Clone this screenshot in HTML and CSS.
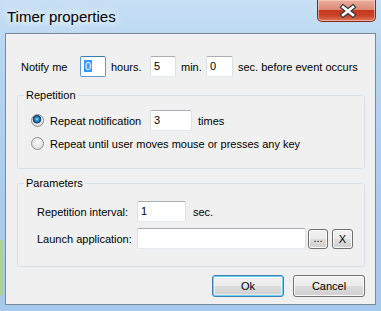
FILE: index.html
```html
<!DOCTYPE html>
<html lang="en">
<head>
    <meta charset="UTF-8">
    <title>Timer properties</title>
    <link rel="stylesheet" href="styles.css">
</head>
<body>

    <div class="window">
        <div class="titlebar">
            <span class="title">Timer properties</span>
            <div class="close">
                <svg width="18" height="14" viewBox="0 0 18 14">
                    <path d="M4 3 L14 11 M14 3 L4 11" stroke="#3a3a3a" stroke-width="5" stroke-linecap="square" fill="none"/>
                    <path d="M4 3 L14 11 M14 3 L4 11" stroke="#ffffff" stroke-width="2.6" stroke-linecap="square" fill="none"/>
                </svg>
            </div>
        </div>

        <div class="client">
            <div class="notify-row">
                <span class="lbl-notify">Notify me</span>
                <div class="field focused w-hours"><span class="sel">0</span></div>
                <span class="lbl-hours">hours.</span>
                <div class="field w-min">5</div>
                <span class="lbl-min">min.</span>
                <div class="field w-sec">0</div>
                <span class="lbl-sec">sec. before event occurs</span>
            </div>

            <fieldset class="group">
                <legend>Repetition</legend>
                <div class="group-body repeat-body">
                    <div class="radio-row">
                        <span class="radio checked"></span>
                        <span class="lbl-repeat">Repeat notification</span>
                        <div class="field w-times">3</div>
                        <span class="lbl-times">times</span>
                    </div>
                    <div class="radio-row second">
                        <span class="radio"></span>
                        <span>Repeat until user moves mouse or presses any key</span>
                    </div>
                </div>
            </fieldset>

            <fieldset class="group params">
                <legend>Parameters</legend>
                <div class="group-body params-body">
                    <div class="param-row">
                        <span class="lbl-param">Repetition interval:</span>
                        <div class="field w-interval">1</div>
                        <span class="lbl-unit">sec.</span>
                    </div>
                    <div class="param-row second">
                        <span class="lbl-param">Launch application:</span>
                        <div class="field w-app"></div>
                        <div class="btn small browse">...</div>
                        <div class="btn small clear">X</div>
                    </div>
                </div>
            </fieldset>

            <div class="buttons">
                <div class="btn default">Ok</div>
                <div class="btn">Cancel</div>
            </div>
        </div>
    </div>

</body>
</html>
```

FILE: styles.css
```css
html, body { margin: 0; padding: 0; }
body { width: 381px; height: 311px; overflow: hidden; font-family: "Liberation Sans", Arial, sans-serif; font-size: 11px; color: #000; }

.window {
    width: 381px; height: 311px; box-sizing: border-box;
    padding: 0 5px 6px 5px;
    display: flex; flex-direction: column;
    background:
        linear-gradient(to right, rgba(176, 214, 110, 0.85) 0, rgba(176, 214, 110, 0) 5px) 0 240px / 6px 55px no-repeat,
        linear-gradient(180deg, #c8e0f5 0%, #b6d5f1 18%, #aacdee 60%, #a6caec 100%);
}

.titlebar { height: 33px; display: flex; justify-content: space-between; align-items: flex-start; }
.title {
    margin: 8px 0 0 2px; font-size: 15px; line-height: 18px; color: #000;
    text-shadow: 0 0 6px #eef6fd, 0 0 10px #eef6fd, 0 0 14px #e6f1fb;
}
.close {
    width: 59px; height: 22px; box-sizing: border-box;
    display: flex; align-items: center; justify-content: center;
    border: 1px solid #7d2a1c; border-top: none; border-radius: 0 0 5px 5px;
    background: linear-gradient(180deg, #e9ae9c 0%, #dc8c76 45%, #c5391e 50%, #c94327 75%, #e0785a 100%);
    box-shadow: inset 0 0 0 1px rgba(255, 220, 210, 0.55);
}
.close svg { display: block; margin-left: 3px; }

.client {
    height: 272px; box-sizing: border-box;
    border: 1px solid #7a8897;
    background: #f0f0f0;
    padding: 22px 10px 0 11px;
}

.field {
    height: 21px; box-sizing: border-box;
    border: 1px solid #abadb3; border-left-color: #dbdfe6; border-right-color: #dbdfe6; border-bottom-color: #e3e9ef;
    border-radius: 2px; background: #fff;
    padding: 0 3px; line-height: 19px;
}
.field.focused { border-color: #5b9bd0; border-top-color: #3d7bad; }
.sel { background: #3399ff; color: #fff; padding: 0 1px; }

.notify-row { display: flex; align-items: center; margin-left: 4px; }
.lbl-notify { width: 59px; }
.w-hours { width: 26px; }
.lbl-hours { width: 39px; margin-left: 5px; }
.w-min { width: 26px; }
.lbl-min { width: 25px; margin-left: 5px; }
.w-sec { width: 27px; }
.lbl-sec { margin-left: 5px; }

.group {
    margin: 12px 0 0 0; padding: 0 6px; min-width: 0;
    border: 1px solid #d5dfe5; border-radius: 3px;
}
.group.params { margin-top: 8px; }
.group legend { padding: 0 2px; line-height: 13px; }

.repeat-body { padding: 8px 0 18px 7px; }
.radio-row { display: flex; align-items: center; height: 21px; }
.radio-row.second { height: 13px; margin-top: 6px; }
.radio {
    width: 13px; height: 13px; box-sizing: border-box; border-radius: 50%;
    border: 1px solid #8d8e8f;
    background: radial-gradient(circle at 50% 40%, #fbfbfb 0%, #e6e6e6 55%, #cfcfcf 100%);
    margin-right: 6px; flex: none;
}
.radio.checked {
    background:
        radial-gradient(circle at 45% 38%, #bfe9ff 0, #3a9ad8 1.5px, #16609e 3px, #0d3d6b 4px, rgba(13, 61, 107, 0) 4.6px),
        radial-gradient(circle at 50% 40%, #fbfbfb 0%, #e6e6e6 55%, #cfcfcf 100%);
}
.lbl-repeat { width: 100px; }
.w-times { width: 42px; }
.lbl-times { margin-left: 6px; }

.params-body { padding: 11px 0 17px 13px; }
.param-row { display: flex; align-items: center; height: 21px; }
.param-row.second { margin-top: 6px; }
.lbl-param { width: 100px; }
.w-interval { width: 49px; }
.lbl-unit { margin-left: 7px; }
.w-app { width: 169px; }

.btn {
    box-sizing: border-box; width: 72px; height: 22px;
    display: flex; align-items: center; justify-content: center;
    border: 1px solid #707070; border-radius: 3px;
    background: linear-gradient(180deg, #f2f2f2 0%, #ebebeb 48%, #dddddd 52%, #cfcfcf 100%);
    box-shadow: inset 0 0 0 1px #fbfbfb;
}
.btn.default { border-color: #3c7fb1; box-shadow: inset 0 0 0 1px #6fd0f5, inset 0 0 0 2px rgba(255, 255, 255, 0.5); }
.btn.small { width: 20px; height: 20px; }
.btn.browse { margin-left: 2px; align-items: flex-end; padding-bottom: 4px; }
.btn.clear { margin-left: 4px; width: 21px; }

.buttons { display: flex; justify-content: flex-end; gap: 9px; margin-top: 8px; }
```
